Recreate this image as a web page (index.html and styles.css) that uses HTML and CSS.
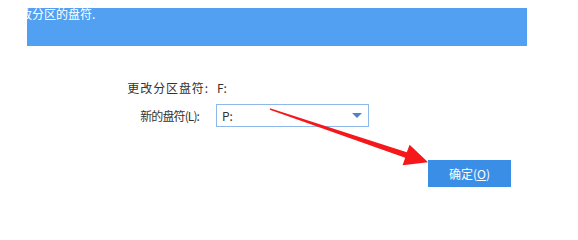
FILE: index.html
```html
<!DOCTYPE html>
<html>
<head>
<meta charset="utf-8">
<link rel="stylesheet" href="styles.css">
</head>
<body>
<div class="band"><div class="band-text">更改分区的盘符.</div></div>
<div class="form">
  <div class="label l1">更改分区盘符:</div>
  <div class="value">F:</div>
  <div class="label l2">新的盘符(L):</div>
  <div class="select"><span>P:</span><span class="caret"></span></div>
</div>
<div class="actions"><button class="ok">确定(<u>O</u>)</button></div>
<svg class="arrow" width="578" height="218" viewBox="0 0 578 218">
  <polygon points="270,108.3 406.8,152.2 409.6,144.8 428,162.3 402.6,165.2 405.2,157.8 269.8,109.7" fill="#f5171a"/>
</svg>
</body>
</html>
```
FILE: styles.css
```css
html, body { margin: 0; padding: 0; background: #fff; }
body {
  width: 578px; height: 218px; position: relative; overflow: hidden;
  font-family: "Microsoft YaHei", "Noto Sans CJK SC", sans-serif;
  color: #333;
}
.band {
  margin: 8px 0 0 27px;
  width: 500px; height: 38px;
  background: #52a0f2;
  overflow: hidden;
}
.band-text {
  color: #fff; font-size: 12px; line-height: 12px;
  margin-top: 0; text-indent: -19px; white-space: nowrap;
}
.form {
  display: grid;
  grid-template-columns: 208px 153px;
  grid-template-rows: 16px 23px;
  column-gap: 8px; row-gap: 8px;
  margin-top: 34px;
}
.label { text-align: right; font-size: 12px; line-height: 16px; white-space: nowrap; align-self: center; }
.l1 { letter-spacing: 0.9px; margin-right: -1px; }
.l2 { letter-spacing: -0.9px; padding-right: 9px; }
.value { font-size: 12px; line-height: 16px; padding-left: 1px; }
.select {
  box-sizing: border-box; height: 23px;
  border: 1px solid #8db9ea;
  display: flex; align-items: center; justify-content: space-between;
  padding: 0 6px 0 5px; font-size: 12px;
}
.caret {
  width: 0; height: 0;
  border-left: 5px solid transparent; border-right: 5px solid transparent;
  border-top: 5px solid #4f83c4;
}
.actions { display: flex; padding-left: 428px; margin-top: 33px; }
.ok {
  width: 83px; height: 27px; border: 0; margin: 0; padding: 0;
  background: #3a8ee6; color: #fff;
  font-family: "Microsoft YaHei", "Noto Sans CJK SC", sans-serif;
  font-size: 12px;
}
.ok u { text-decoration-thickness: 1px; text-underline-offset: 1px; }
.arrow { position: absolute; left: 0; top: 0; pointer-events: none; }
```
